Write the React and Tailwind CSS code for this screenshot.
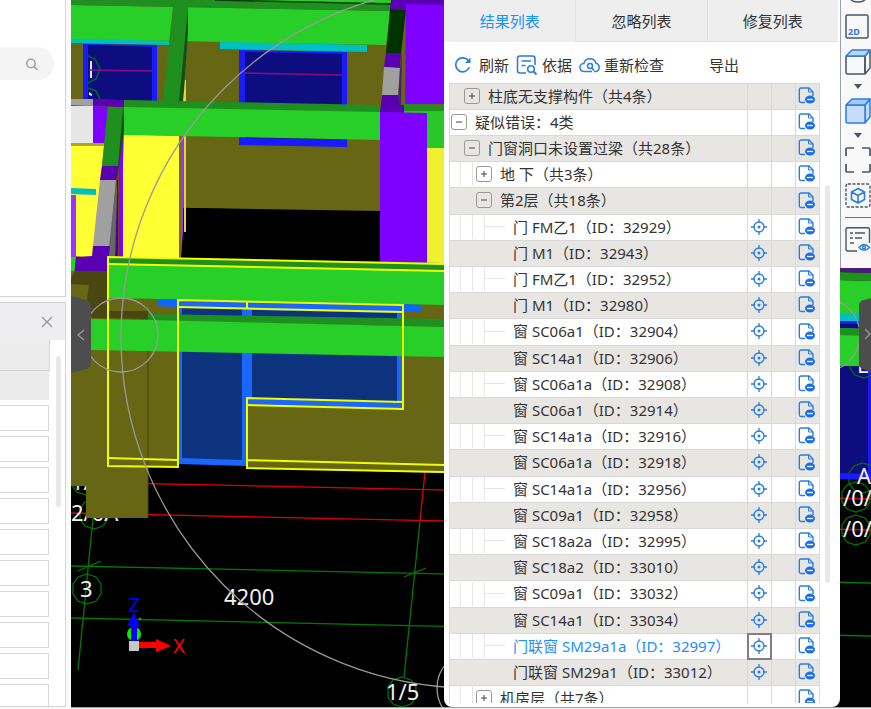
import React from 'react';

const { useState } = React;

const groups = [
  { level: 1, open: false, name: '柱底无支撑构件（共4条）' },
  { level: 0, open: true, name: '疑似错误：4类' },
  { level: 1, open: true, name: '门窗洞口未设置过梁（共28条）' },
  { level: 2, open: false, name: '地 下（共3条）' },
  { level: 2, open: true, name: '第2层（共18条）' }
];

const leaves = [
  ['门 FM乙1', 32929],
  ['门 M1', 32943],
  ['门 FM乙1', 32952],
  ['门 M1', 32980],
  ['窗 SC06a1', 32904],
  ['窗 SC14a1', 32906],
  ['窗 SC06a1a', 32908],
  ['窗 SC06a1', 32914],
  ['窗 SC14a1a', 32916],
  ['窗 SC06a1a', 32918],
  ['窗 SC14a1a', 32956],
  ['窗 SC09a1', 32958],
  ['窗 SC18a2a', 32995],
  ['窗 SC18a2', 33010],
  ['窗 SC09a1', 33032],
  ['窗 SC14a1', 33034],
  ['门联窗 SM29a1a', 32997],
  ['门联窗 SM29a1', 33012]
];

const rows = [
  ...groups,
  ...leaves.map(([name, id]) => ({ level: 3, id, name: `${name}（ID：${id}）` })),
  { level: 2, open: false, name: '机房层（共7条）' }
];

const P = ({ p, f }) => <polygon points={p} fill={f} />;

// Axis bubble at the end of a grid line
const Bubble = ({ x, y }) => (
  <polygon
    points="0,-15 9,-12 14,-5 14,5 9,12 0,15 -9,12 -14,5 -14,-5 -9,-12"
    transform={`translate(${x} ${y})`}
    fill="none"
    stroke="#007a00"
    strokeWidth="1.2"
  />
);

const Scene = () => (
  <svg
    viewBox="71 0 800 707"
    preserveAspectRatio="xMinYMin slice"
    className="absolute inset-0 h-full w-full bg-black"
    aria-hidden="true"
  >
    {/* Axis grid */}
    <g stroke="#e00000" strokeWidth="1.3">
      <path d="M71 482L871 499M71 513L871 530M425 472L420 521" />
    </g>
    <g stroke="#007a00" strokeWidth="1.3">
      <path d="M71 566L871 583M71 618L871 636M93 518L78 670M420 521L404 677M78 571L101 561M404 577L426 568" />
    </g>
    <Bubble x={87} y={589} />
    <Bubble x={94} y={514} />
    <Bubble x={86} y={480} />
    <Bubble x={402} y={692} />
    <g fill="#f2f2f2" fontFamily="'Noto Sans', sans-serif" fontSize="22">
      <text x="80" y="597">3</text>
      <text x="224" y="605">4200</text>
      <text x="386" y="700">1/5</text>
      <text x="71" y="521">2/0A</text>
      <text x="71" y="490">1/</text>
    </g>

    {/* Upper storey */}
    <P p="71,0 444,0 444,212 71,206" f="#666615" />
    <P p="188,208 380,212 380,262 180,258 183,232" f="#000" />
    <P p="71,38 170,41 170,45 71,43" f="#00bfbf" />
    <P p="220,41 367,45 367,52 220,49" f="#00bfbf" />
    <P p="83,44 157,45 157,101 83,99" f="#1a1aff" />
    <P p="88,45 152,47 152,101 88,99" f="#0d0d80" />
    <path d="M88 56L95 59L100 69L96 79L88 83M88 88L96 91L100 99" fill="none" stroke="#00661f" strokeWidth="1.6" />
    <P p="90,61 92,61 92,78 90,78" f="#e6e6f5" />
    <P p="89,92 92,94 92,96 89,95" f="#e6e6f5" />
    <P p="239,50 347,52 347,147 239,145" f="#1a1aff" />
    <P p="245,52 342,54 342,140 245,138" f="#0d0d80" />
    <path d="M89 70L152 71M245 73L342 75" stroke="#8a0a8a" strokeWidth="1.6" />
    <P p="71,5 391,11 386,45 71,39" f="#29cf29" />
    <P p="71,0 391,0 391,11 71,5" f="#1f8f1f" />
    <P p="255,0 391,0 391,3" f="#29cf29" />
    <path d="M215 0L391 4" stroke="#0c3a0c" strokeWidth="1.4" />
    <P p="173,6 188,7 183,102 163,101" f="#1f8f1f" />
    <P p="188,8 188,32 183,102 179,102" f="#145014" />
    <P p="185,80 186,80 186,102 183,102" f="#d9d940" />

    {/* Middle beam line */}
    <P p="71,99 93,99 93,106 71,105" f="#a0a0a0" />
    <P p="93,99 124,100 124,107 93,106" f="#5900b3" />
    <P p="71,106 93,106 93,143 71,143" f="#e6e6e6" />
    <P p="93,106 108,107 104,144 93,143" f="#8000ff" />
    <P p="71,143 104,143 104,147 71,146" f="#b3a61a" />
    <P p="71,146 104,146 93,258 71,256" f="#ffff33" />
    <P p="71,188 96,189 96,195 71,194" f="#00bfbf" />
    <P p="71,195 76,195 76,257 71,257" f="#9933ff" />
    <P p="123,134 180,136 180,259 123,257" f="#ffff33" />
    <P p="179,136 181,136 181,259 179,259" f="#806614" />
    <P p="181,136 184,136 183,232 181,259" f="#9933ff" />
    <P p="184,136 186,136 186,232 184,232" f="#d9d940" />
    <P p="124,100 380,105 380,113 124,107" f="#1f8f1f" />
    <P p="124,107 380,112 380,140 124,135" f="#29cf29" />
    <P p="123,107 124,130 120,258 107,258 116,166" f="#6b4a14" />
    <P p="119,150 123,135 123,257 119,257" f="#8000ff" />
    <P p="117,180 118,180 118,257 115,257" f="#4d0099" />
    <P p="123,107 124,130 117,180 116,166" f="#145014" />
    <P p="108,107 123,107 118,166 102,166" f="#1f8f1f" />
    <P p="102,166 118,166 116,181 100,180" f="#5900b3" />
    <P p="100,180 116,180 110,247 93,246" f="#a0a0a0" />
    <P p="116,181 117,190 115,257 108,257" f="#666" />
    <P p="93,246 110,246 107,271 75,271 76,257 92,256" f="#5900b3" />

    {/* Columns on the right */}
    <P p="391,0 444,0 444,6 406,5 406,10 390,9" f="#5900b3" />
    <P p="390,9 406,10 401,53 386,53" f="#003300" />
    <P p="386,53 401,53 400,68 384,67" f="#5900b3" />
    <P p="384,67 400,68 398,95 382,95" f="#a0a0a0" />
    <P p="382,95 398,95 400,105 404,105 404,113 380,113" f="#5900b3" />
    <P p="400,68 402,50 401,105 398,105" f="#4d1a80" />
    <P p="406,4 444,5 444,104 405,104" f="#8000ff" />
    <P p="404,104 444,105 444,112 404,111" f="#1f8f1f" />
    <P p="404,111 444,111 444,148 404,148" f="#28c828" />
    <P p="427,148 444,148 444,265 427,263" f="#f0f030" />
    <P p="380,112 427,113 427,263 380,262" f="#8000ff" />

    {/* Lower storey */}
    <P p="71,257 76,257 74,278 71,278" f="#29cf29" />
    <P p="71,271 107,271 148,300 148,518 86,518 86,486 71,486" f="#666615" />
    <P p="71,278 75,271 107,271 107,311 148,311 148,319 92,318 87,300 89,285 71,284" f="#4a4610" />
    <P p="107,298 444,304 444,473 247,468 247,404 178,464 178,466 107,466" f="#666615" />
    <P p="107,311 148,311 148,319 107,318" f="#4a4610" />
    <path d="M148 350V518" stroke="#4a4610" />
    <P p="107,257 444,263 444,272 107,264" f="#1f8f1f" />
    <P p="107,264 444,271 444,305 107,298" f="#29cf29" />
    <P p="157,299 178,300 178,307 157,306" f="#0d66ff" />
    <P p="403,304 421,305 421,312 403,311" f="#0d66ff" />
    <P p="178,300 403,304 403,409 247,404 247,466 178,464" f="#1a66ff" />
    <P p="182,308 242,309 242,460 182,458" f="#0d337f" />
    <P p="252,310 397,313 397,402 252,399" f="#0d337f" />
    <P p="148,314 444,319 444,327 148,321" f="#1f8f1f" />
    <P p="91,319 148,320 444,327 444,357 91,350" f="#29cf29" />
    <g fill="none" stroke="#eeff00" strokeWidth="2">
      <path d="M444 264L108 257V466L178 467V300L403 305V409L247 405" />
      <path d="M108 264L444 271M178 307L403 312M247 301V308M108 458L178 460" />
      <path d="M403 402L247 398V468L444 472M247 460L444 465" />
    </g>

    {/* Orbit guides */}
    <g fill="none" stroke="#999" strokeWidth="1.3">
      <circle cx="472" cy="337" r="351" />
      <circle cx="121" cy="335" r="37" />
      <circle cx="474" cy="688" r="37" />
    </g>

    {/* Axis tripod */}
    <circle cx="134" cy="634" r="7" fill="#00ee00" />
    <circle cx="140" cy="619" r="1.5" fill="#00b300" />
    <P p="138,642 156,642 156,639 171,646 156,652 156,648 138,648" f="#ff0000" />
    <P p="131,642 131,626 127,626 134,612 140,626 137,626 137,642" f="#0000ff" />
    <rect x="129" y="641" width="10" height="10" fill="#c8c8c8" />
    <g fontFamily="'Noto Sans', sans-serif" fontSize="20" textAnchor="middle">
      <text x="134" y="612" fill="#0000ff">Z</text>
      <text x="179" y="653" fill="#ff0000">X</text>
    </g>

    {/* Part of the model past the result panel */}
    <P p="836,366 871,366 871,474 836,474" f="#0d0d80" />
    <P p="868,366 871,366 871,474 868,474" f="#1a1af0" />
    <Bubble x={864} y={363} />
    <Bubble x={863} y={478} />
    <text x="857" y="373" fill="#f2f2f2" fontFamily="'Noto Sans', sans-serif" fontSize="22">E</text>
    <P p="836,268 871,268 871,273 836,272" f="#4a1a80" />
    <P p="836,272 871,273 871,281 836,280" f="#1f8f1f" />
    <P p="836,280 871,281 871,366 836,366" f="#29cf29" />
    <P p="836,314 871,314 871,321 836,321" f="#00bfbf" />
    <P p="836,321 871,321 871,324 836,324" f="#1a1aff" />
    <P p="836,324 871,324 871,329 836,328" f="#0d0d80" />
    <P p="836,328 871,329 871,336 836,335" f="#1f8f1f" />
    <P p="836,473 871,474 871,480 836,479" f="#1a1aff" />
    <circle cx="823" cy="335" r="37" fill="none" stroke="#999" strokeWidth="1.3" />
    <Bubble x={856} y={497} />
    <Bubble x={856} y={530} />
    <g fill="#f2f2f2" fontFamily="'Noto Sans', sans-serif" fontSize="22">
      <text x="857" y="484">A</text>
      <text x="843" y="506">/0/</text>
      <text x="843" y="537">/0/</text>
    </g>
  </svg>
);

const RefreshIcon = () => (
  <svg viewBox="0 0 18 18" className="size-[18px]" fill="none" stroke="#2a7de1" strokeWidth="1.7">
    <path d="M15.3 11.2A7 7 0 1 1 14.6 5" />
    <path d="M16.5 1.5V7H11z" fill="#2a7de1" stroke="none" />
  </svg>
);

const BasisIcon = () => (
  <svg viewBox="0 0 22 22" className="size-[22px]" fill="none" stroke="#2a7de1" strokeWidth="1.6">
    <path d="M10 19H4A2.5 2.5 0 0 1 1.5 16.5V4.5A2.5 2.5 0 0 1 4 2H16.5A2.5 2.5 0 0 1 19 4.5V11" />
    <path d="M5.5 7H15M5.5 11.5H9.5" />
    <circle cx="15" cy="15" r="3.3" />
    <path d="M17.5 17.5L20.5 20.5" strokeWidth="2" />
  </svg>
);

const CloudIcon = () => (
  <svg viewBox="0 0 22 18" className="h-[18px] w-[22px]" fill="none" stroke="#2a7de1" strokeWidth="1.5">
    <path d="M13 15.5H5A4 4 0 0 1 4.8 7.5A6.3 6.3 0 0 1 17 7.3A4.2 4.2 0 0 1 16.8 15.5H15" />
    <circle cx="11" cy="10" r="2.5" />
    <path d="M12.8 12L15 14.5" strokeWidth="1.8" />
  </svg>
);

const TargetIcon = () => (
  <svg viewBox="0 0 16 16" className="size-4" fill="none" stroke="#2a7de1" strokeWidth="1.3">
    <circle cx="8" cy="8" r="5" />
    <circle cx="8" cy="8" r="1.5" fill="#2a7de1" stroke="none" />
    <path d="M8 0V4M8 12V16M0 8H4M12 8H16" />
  </svg>
);

const IgnoreIcon = () => (
  <svg viewBox="0 0 17 17" className="size-[17px]">
    <path
      d="M7 15.5H3A1.7 1.7 0 0 1 1.3 13.8V2.7A1.7 1.7 0 0 1 3 1H11L15 5V9"
      fill="none"
      stroke="#2a7de1"
      strokeWidth="1.4"
    />
    <path d="M10.5 1V5H15" fill="none" stroke="#2a7de1" />
    <ellipse cx="12" cy="12.5" rx="5" ry="4" fill="#1a6fe8" />
    <path d="M9 12.5H15" stroke="#fff" strokeWidth="1.3" />
  </svg>
);

const CubeIcon = ({ filled }) => (
  <svg viewBox="0 0 26 26" className="size-[26px]" fill="none" stroke={filled ? '#2a7de1' : '#4b5563'} strokeWidth="1.5" strokeLinejoin="round">
    <path d="M20 7L25 1V19L20 25z" fill={filled ? '#c8dcf8' : 'none'} />
    <rect x="1" y="7" width="19" height="18" rx="1.5" fill={filled ? '#c8dcf8' : 'none'} />
    <path d="M1 7L7 1H25L20 7z" fill={filled ? '#a8c8f5' : '#b9d5fa'} stroke="#2a7de1" />
  </svg>
);

const Caret = () => (
  <svg viewBox="0 0 8 5" className="h-[5px] w-[26px]">
    <path d="M0 0H8L4 5z" fill="#4b5563" />
  </svg>
);

const ViewToolbar = () => (
  <div className="flex h-[268px] w-[31px] shrink-0 flex-col items-start gap-[9px] overflow-hidden border-l border-gray-400 bg-[#f8f8f9] pl-1">
    <button aria-label="Orbit">
      <svg viewBox="0 0 26 5" className="h-[5px] w-[26px]" fill="none" stroke="#4b5563" strokeWidth="1.5">
        <ellipse cx="13" cy="-1" rx="7" ry="3" />
      </svg>
    </button>
    <button aria-label="2D">
      <svg viewBox="0 0 26 26" className="size-[26px]">
        <rect x="1" y="1" width="22" height="23" rx="1.5" fill="none" stroke="#4b5563" strokeWidth="1.5" />
        <text x="3" y="21" fontSize="9" fontWeight="700" fontFamily="'Noto Sans', sans-serif" fill="#2a7de1">2D</text>
      </svg>
    </button>
    <button aria-label="Box view"><CubeIcon /></button>
    <button aria-label="Box view options"><Caret /></button>
    <button aria-label="Solid view"><CubeIcon filled /></button>
    <button aria-label="Solid view options"><Caret /></button>
    <button aria-label="Fit to window">
      <svg viewBox="0 0 26 26" className="size-[26px]" fill="none" stroke="#4b5563" strokeWidth="1.7">
        <path d="M1 9V2A1 1 0 0 1 2 1H9M17 1H24A1 1 0 0 1 25 2V9M25 17V24A1 1 0 0 1 24 25H17M9 25H2A1 1 0 0 1 1 24V17" />
      </svg>
    </button>
    <button aria-label="Section box">
      <svg viewBox="0 0 26 26" className="size-[26px]" fill="none" strokeLinejoin="round">
        <rect x="1" y="2" width="24" height="23" rx="2" stroke="#4b5563" strokeWidth="1.4" strokeDasharray="3 1.5" />
        <path d="M13 6.5L19.5 10V17.5L13 21L6.5 17.5V10zM6.5 10L13 13.5L19.5 10M13 13.5V21" stroke="#2a7de1" strokeWidth="1.6" />
      </svg>
    </button>
    <div className="h-px w-full bg-gray-500" />
    <button aria-label="Visibility list">
      <svg viewBox="0 0 26 26" className="size-[26px]" fill="none" stroke="#4b5563" strokeWidth="1.4">
        <path d="M12 24H2.5A1.5 1.5 0 0 1 1 22.5V2A1.5 1.5 0 0 1 2.5 0.7H23A1.5 1.5 0 0 1 24.5 2V16" />
        <path d="M5 6H8M10 6H20M5 11H8M10 11H17M5 16H9" />
        <path d="M14 20.5Q19 14.5 24.500 20.5Q19 26 14 20.5z" stroke="#2a7de1" />
        <circle cx="19" cy="20.5" r="1.5" stroke="#2a7de1" />
      </svg>
    </button>
  </div>
);

const Sidebar = () => (
  <aside className="flex w-[71px] shrink-0 flex-col gap-[5px] bg-[#fafafa] pr-[5px] pb-0.5">
    <div className="h-[297px] shrink-0 border-r border-b border-[#d4d4d4] bg-white pt-[47px]">
      <button aria-label="搜索" className="flex h-[33px] w-[54px] items-center justify-end rounded-r-full bg-[#f4f4f4] pr-4">
        <svg viewBox="0 0 12 12" className="size-3" fill="none" stroke="#a3a3a3" strokeWidth="1.6">
          <circle cx="5" cy="5.5" r="4.2" />
          <path d="M8 8.5L11.5 12" />
        </svg>
      </button>
    </div>
    <div className="flex min-h-0 flex-1 flex-col border-t border-r border-b border-[#d4d4d4] bg-white">
      <div className="flex h-[37px] shrink-0 items-center justify-end bg-[#eeeef0] pr-3">
        <button aria-label="关闭">
          <svg viewBox="0 0 12 12" className="size-3" stroke="#999" strokeWidth="1.4">
            <path d="M1 1L11 11M11 1L1 11" />
          </svg>
        </button>
      </div>
      <div className="flex min-h-0 flex-1 justify-between pr-1">
        <div className="flex w-[50px] flex-col gap-[5px] overflow-hidden">
          <div className="shrink-0">
            <div className="h-[31px] border-r border-b border-[#d4d4d4] bg-[#ececec]" />
            <div className="mr-px h-[29px] bg-[#ebebeb]" />
          </div>
          {Array.from({ length: 10 }, (_, i) => (
            <input
              key={i}
              aria-label={`属性 ${i + 1}`}
              className="mr-px h-[26px] shrink-0 border border-l-0 border-[#d9d9d9] bg-white px-1 text-xs outline-none"
            />
          ))}
        </div>
        <div className="mt-4 h-[151px] w-[5px] rounded-full bg-[#e8e8e8]" />
      </div>
    </div>
  </aside>
);

const Guide = ({ first }) => (
  <span className={`h-[25px] shrink-0 border-r border-[#e8e6e3] ${first ? 'w-[11px]' : 'w-3'}`} />
);

const ResultRow = ({ row, selected, onSelect }) => (
  <tr className="h-[26px] odd:bg-[#e8e6e3] even:bg-white nth-[5n]:h-[27px] [&>td]:border-r [&>td]:border-b [&>td]:border-[#d9d9d9] [&>td]:p-0">
    <td className="border-l">
      <div className="flex h-[25px] items-center overflow-hidden pb-0.5 whitespace-nowrap">
        {row.level > 0 && <Guide first />}
        {row.level > 1 && <Guide />}
        {row.level > 2 && <Guide />}
        {row.level === 3 ? (
          <span className="mr-2 h-px w-5 shrink-0 bg-[#e8e6e3]" />
        ) : (
          <button
            aria-label={row.open ? '收起' : '展开'}
            className={`mr-2 flex size-4 shrink-0 items-center justify-center rounded-[3px] border border-[#999] ${row.level ? 'ml-[3px]' : 'ml-px'}`}
          >
            <svg viewBox="0 0 8 8" className="size-2" stroke="#444">
              <path d={row.open ? 'M1 4H7' : 'M1 4H7M4 1V7'} />
            </svg>
          </button>
        )}
        <span className={selected ? 'text-[#1890ff]' : ''}>{row.name}</span>
      </div>
    </td>
    <td>
      {row.level === 3 && (
        <button
          aria-label={`定位 ${row.id}`}
          onClick={() => onSelect(row.id)}
          className={`flex h-[25px] w-full items-center justify-center pr-0.5 pb-0.5 ${selected ? 'outline-2 -outline-offset-1 outline-[#808080]' : ''}`}
        >
          <TargetIcon />
        </button>
      )}
    </td>
    <td></td>
    <td>
      <button aria-label="忽略" className="flex h-[25px] w-full items-center justify-center pr-0.5 pb-0.5">
        <IgnoreIcon />
      </button>
    </td>
  </tr>
);

const ResultPanel = () => {
  const [tab, setTab] = useState('结果列表');
  const [selectedId, setSelectedId] = useState(32997);

  return (
    <section className="flex w-[396px] min-w-0 flex-col self-stretch overflow-hidden rounded-b-lg bg-white pb-1 text-[15px] leading-5 text-[#333]">
      <div className="mr-0.5 grid h-[42px] shrink-0 grid-cols-3 bg-[#eee]">
        {['结果列表', '忽略列表', '修复列表'].map(name => (
          <button
            key={name}
            onClick={() => setTab(name)}
            className={tab === name ? 'text-[#1890ff]' : 'border-b border-l border-[#e0e0e0]'}
          >
            {name}
          </button>
        ))}
      </div>

      <div className="flex h-[41px] shrink-0 items-center pt-1 pl-2.5">
        <button className="mr-[7px] flex items-center gap-[7px]"><RefreshIcon />刷新</button>
        <button className="mr-[7px] flex items-center gap-1"><BasisIcon />依据</button>
        <button className="flex items-center gap-[3px]"><CloudIcon />重新检查</button>
        <button className="ml-[45px]">导出</button>
      </div>

      <div className="flex min-h-0 flex-1 justify-between pr-2.5 pl-[5px]">
        <div className="min-h-0 w-[371px] overflow-hidden">
          <table className="w-full table-fixed border-separate border-spacing-0 border-t border-[#d9d9d9]">
            <colgroup>
              <col />
              <col className="w-6" />
              <col className="w-6" />
              <col className="w-6" />
            </colgroup>
            <tbody>
              {rows.map(row => (
                <ResultRow
                  key={row.name}
                  row={row}
                  selected={row.id === selectedId}
                  onSelect={setSelectedId}
                />
              ))}
            </tbody>
          </table>
        </div>
        <div className="mt-[102px] h-[398px] w-[5px] rounded-full bg-[#e8e8e8]" />
      </div>
    </section>
  );
};

export default function App() {
  return (
    <div className="flex h-screen overflow-hidden bg-[#f0f0f0] font-['Noto_Sans','Noto_Sans_CJK_SC',sans-serif]">
      <Sidebar />
      <main className="relative mb-px flex min-w-0 flex-1 justify-end border-b border-gray-400">
        <Scene />
        <button
          aria-label="收起左侧"
          className="absolute top-[296px] left-0 flex h-[77px] w-5 items-center justify-center bg-[#4d4d4d] [clip-path:polygon(0_0,85%_6%,100%_10%,100%_90%,85%_94%,0_100%)]"
        >
          <svg viewBox="0 0 8 12" className="h-3 w-2" fill="none" stroke="#999" strokeWidth="1.3">
            <path d="M7 1L1 6L7 11" />
          </svg>
        </button>
        <button
          aria-label="收起右侧"
          className="absolute top-[296px] right-0 flex h-[76px] w-3 items-center justify-end overflow-hidden bg-[#4d4d4d] [clip-path:polygon(0_10%,25%_6%,100%_3%,100%_100%,25%_96%,0_92%)]"
        >
          <svg viewBox="0 0 6 12" className="h-3 w-1.5" fill="none" stroke="#999" strokeWidth="1.3">
            <path d="M0 1L5 6L0 11" />
          </svg>
        </button>
        <div className="relative flex items-start">
          <ResultPanel />
          <ViewToolbar />
        </div>
      </main>
    </div>
  );
}
